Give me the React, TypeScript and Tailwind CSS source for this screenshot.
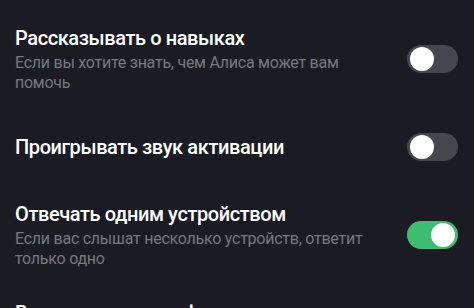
import React, { useState } from 'react';

type Item = {
  title: string;
  hint?: string;
  on: boolean;
};

const items: Item[] = [
  { title: 'Рассказывать о навыках', hint: 'Если вы хотите знать, чем Алиса может вам помочь', on: false },
  { title: 'Проигрывать звук активации', on: false },
  { title: 'Отвечать одним устройством', hint: 'Если вас слышат несколько устройств, ответит только одно', on: true },
];

function Toggle({ on, onClick }: { on: boolean; onClick: () => void }) {
  return (
    <button
      onClick={onClick}
      className={`relative w-[51px] h-[28px] rounded-full shrink-0 ${on ? 'bg-[#3dbd70]' : 'bg-[#45464e]'}`}
    >
      <span
        className={`absolute top-[2px] w-[24px] h-[24px] rounded-full bg-white ${on ? 'left-[24px]' : 'left-[3px]'}`}
      />
    </button>
  );
}

function App() {
  const [state, setState] = useState(items.map((i) => i.on));

  return (
    <div className="w-[474px] h-[308px] overflow-hidden bg-[#1b1c23] font-['Roboto',sans-serif]">
      <div className="flex flex-col gap-[40px] pl-[15px] pr-[16px] pt-[25px]">
        {items.map((item, i) => (
          <div key={item.title} className="flex items-center justify-between">
            <div className="w-[375px]">
              <div className="text-[20px] leading-[26px] font-medium tracking-[-0.4px] text-white">{item.title}</div>
              {item.hint && (
                <div className="text-[16px] leading-[20px] tracking-[-0.25px] text-[#77787e] mt-[2px]">{item.hint}</div>
              )}
            </div>
            <Toggle on={state[i]} onClick={() => setState(state.map((v, j) => (j === i ? !v : v)))} />
          </div>
        ))}
      </div>
      {/* next section, cut by the screen edge */}
      <div className="pl-[15px] pt-[31px] text-[20px] leading-[26px] font-medium tracking-[-0.4px] text-white">
        Выключать микрофон во время сна
      </div>
    </div>
  );
}

export default App;
